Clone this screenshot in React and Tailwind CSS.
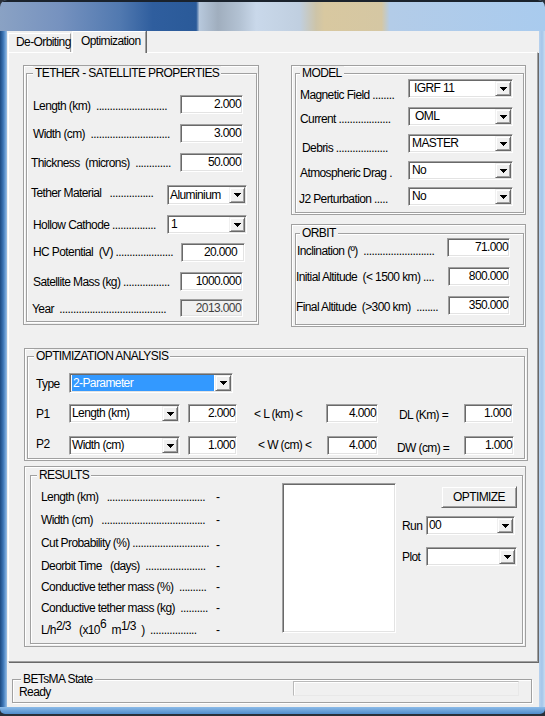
import React from 'react';

// classic win32 bevels
const sunken =
  'border border-t-[#a0a0a0] border-l-[#a0a0a0] border-r-white border-b-white shadow-[inset_1px_1px_0_#696969,inset_-1px_-1px_0_#e3e3e3]';
const raised =
  'border border-t-[#f0f0f0] border-l-[#f0f0f0] border-r-[#696969] border-b-[#696969] shadow-[inset_1px_1px_0_#fff,inset_-1px_-1px_0_#a0a0a0]';

const d = (n) => '.'.repeat(n);

function Arrow() {
  return (
    <svg width="7" height="4" viewBox="0 0 7 4" className="block">
      <path d="M0 0h7v1h-1v1h-1v1h-1v1h-1v-1h-1v-1h-1v-1h-1z" fill="#000" />
    </svg>
  );
}

function Combo({ value, size, pad = 'pl-[3px]', selected = false }) {
  return (
    <div className={`flex shrink-0 items-center bg-white ${sunken} ${size}`}>
      {selected ? (
        <span className="flex-1 self-stretch my-[1px] ml-[2px] mr-[1px] pl-[1px] flex items-center bg-[#3399ff] text-white whitespace-pre">
          {value}
        </span>
      ) : (
        <span className={`flex-1 whitespace-pre overflow-hidden ${pad}`}>{value}</span>
      )}
      <span className={`self-stretch my-[1px] mr-[1px] w-[16px] shrink-0 flex items-center justify-center bg-[#f0f0f0] ${raised}`}>
        <Arrow />
      </span>
    </div>
  );
}

function Field({ value, size, pr = 'pr-[1px]', disabled = false }) {
  return (
    <div
      className={`flex shrink-0 items-center justify-end whitespace-pre ${pr} ${
        disabled ? 'bg-[#f0f0f0] text-[#404040]' : 'bg-white'
      } ${sunken} ${size}`}
    >
      {value}
    </div>
  );
}

function Label({ children, className = '' }) {
  return <div className={`shrink-0 whitespace-pre overflow-x-clip ${className}`}>{children}</div>;
}

function Group({ title, tl = 'left-[6px]', className = '', children }) {
  return (
    <div className={`relative border border-[#a0a0a0] shadow-[inset_1px_1px_0_#fff,1px_1px_0_#fff] ${className}`}>
      <span className={`absolute -top-[8px] ${tl} bg-[#f0f0f0] px-[2px] whitespace-pre`}>{title}</span>
      {children}
    </div>
  );
}

function Frame({ className = '', children }) {
  return (
    <div className={`flex flex-col border border-[#a0a0a0] shadow-[inset_1px_1px_0_#fff] ${className}`}>
      {children}
    </div>
  );
}

const tetherRows = [
  { label: 'Length (km)  ' + d(26), row: 'mt-[21px] h-[19px]', lab: 'w-[153px] pl-[6px] pt-[4px]', ctrl: <Field value="2.000" size="w-[63px] h-[19px]" /> },
  { label: 'Width (cm)  ' + d(29), row: 'mt-[10px] h-[19px]', lab: 'w-[153px] pl-[6px] pt-[3px]', ctrl: <Field value="3.000" size="w-[63px] h-[19px]" /> },
  { label: 'Thickness  (microns)  ' + d(13), row: 'mt-[10px] h-[19px]', lab: 'w-[153px] pl-[4px] pt-[3px]', ctrl: <Field value="50.000" size="w-[63px] h-[19px]" /> },
  { label: 'Tether Material   ' + d(16), row: 'mt-[13px] h-[20px]', lab: 'w-[140px] pl-[4px] pt-[1px]', ctrl: <Combo value="Aluminium" size="w-[80px] h-[20px]" pad="pl-[2px]" /> },
  { label: 'Hollow Cathode ' + d(16), row: 'mt-[10px] h-[19px]', lab: 'w-[140px] pl-[6px] pt-[3px]', ctrl: <Combo value="1" size="w-[80px] h-[19px]" pad="pl-[3px]" /> },
  { label: 'HC Potential  (V) ' + d(21), row: 'mt-[9px] h-[19px]', lab: 'w-[154px] pl-[6px] pt-[2px]', ctrl: <Field value="20.000" size="w-[64px] h-[19px]" pr="pr-[7px]" /> },
  { label: 'Satellite Mass (kg) ' + d(17), row: 'mt-[10px] h-[19px]', lab: 'w-[153px] pl-[6px] pt-[3px]', ctrl: <Field value="1000.000" size="w-[63px] h-[19px]" /> },
  { label: 'Year  ' + d(39), row: 'mt-[8px] h-[18px]', lab: 'w-[153px] pl-[5px] pt-[3px]', ctrl: <Field value="2013.000" size="w-[63px] h-[18px]" disabled /> },
];

const modelRows = [
  { label: 'Magnetic Field ' + d(8), row: 'mt-[5px] h-[19px]', lab: 'pl-[4px] pt-[9px]', value: 'IGRF 11', pad: 'pl-[5px]' },
  { label: 'Current ' + d(19), row: 'mt-[9px] h-[19px]', lab: 'pl-[4px] pt-[5px]', value: 'OML', pad: 'pl-[6px]' },
  { label: 'Debris ' + d(19), row: 'mt-[8px] h-[19px]', lab: 'pl-[6px] pt-[7px]', value: 'MASTER', pad: 'pl-[3px]' },
  { label: 'Atmospheric Drag .', row: 'mt-[8px] h-[19px]', lab: 'pl-[4px] pt-[5px]', value: 'No', pad: 'pl-[3px]' },
  { label: 'J2 Perturbation ' + d(5), row: 'mt-[7px] h-[19px]', lab: 'pl-[3px] pt-[5px]', value: 'No', pad: 'pl-[3px]' },
];

const orbitRows = [
  { label: 'Inclination (º)  ' + d(26), row: 'mt-[4px] h-[19px]', lab: 'w-[151px] pl-[1px] pt-[6px]', ctrl: <Field value="71.000" size="w-[63px] h-[19px]" /> },
  { label: 'Initial Altitude  (< 1500 km) ' + d(4), row: 'mt-[10px] h-[19px]', lab: 'w-[152px] pt-[3px]', ctrl: <Field value="800.000" size="w-[62px] h-[19px]" /> },
  { label: 'Final Altitude  (>300 km)  ' + d(8), row: 'mt-[10px] h-[19px]', lab: 'w-[152px] pt-[4px]', ctrl: <Field value="350.000" size="w-[62px] h-[19px]" /> },
];

const results = [
  { label: 'Length (km)   ' + d(36), row: 'mt-[14px] h-[15px]', dash: '' },
  { label: 'Width (cm)   ' + d(38), row: 'mt-[8px] h-[15px]', dash: '' },
  { label: 'Cut Probability (%) ' + d(28), row: 'mt-[8px] h-[15px]', dash: 'pt-[2px]' },
  { label: 'Deorbit Time   (days)  ' + d(22), row: 'mt-[8px] h-[15px]', dash: '' },
  { label: 'Conductive tether mass (%)  ' + d(10), row: 'mt-[6px] h-[15px]', dash: '' },
  { label: 'Conductive tether mass (kg)  ' + d(10), row: 'mt-[6px] h-[15px]', dash: '' },
  {
    label: (
      <>
        L/h<span className="align-[4px]">2/3</span>
        {'   (x10'}
        <span className="align-[6px]">6</span>
        {'  m'}
        <span className="align-[4px]">1/3</span>
        {'  )  ' + d(17)}
      </>
    ),
    row: 'mt-[1px] h-[21px]',
    dash: 'pt-[6px]',
  },
];

function OptimizationPanel() {
  return (
    <div className="ml-[1px] w-[530px] h-[610px] shrink-0 flex flex-col border border-t-white border-l-white border-r-[#a0a0a0] border-b-[#a0a0a0] shadow-[1px_1px_0_#696969]">
      {/* top: tether properties + model / orbit */}
      <div className="flex mt-[12px] ml-[14px]">
        <Frame className="w-[236px] h-[260px] pt-[7px] pl-[2px] pr-[1px] pb-[2px]">
          <Group title="TETHER - SATELLITE PROPERTIES" className="flex-1 flex flex-col">
            {tetherRows.map((r) => (
              <div key={r.label} className={`flex items-start ${r.row}`}>
                <Label className={r.lab}>{r.label}</Label>
                {r.ctrl}
              </div>
            ))}
          </Group>
        </Frame>

        <div className="ml-[32px] w-[235px] flex flex-col">
          <Frame className="h-[150px] pt-[7px] pl-[3px] pr-[1px] pb-[1px]">
            <Group title="MODEL" tl="left-[4px]" className="flex-1 flex flex-col">
              {modelRows.map((r) => (
                <div key={r.label} className={`flex items-start ${r.row}`}>
                  <Label className={`w-[112px] ${r.lab}`}>{r.label}</Label>
                  <Combo value={r.value} size="w-[105px] h-[19px]" pad={r.pad} />
                </div>
              ))}
            </Group>
          </Frame>
          <Frame className="mt-[9px] h-[103px] pt-[8px] pl-[3px] pr-[1px] pb-[1px]">
            <Group title="ORBIT" tl="left-[4px]" className="flex-1 flex flex-col">
              {orbitRows.map((r) => (
                <div key={r.label} className={`flex items-start ${r.row}`}>
                  <Label className={r.lab}>{r.label}</Label>
                  {r.ctrl}
                </div>
              ))}
            </Group>
          </Frame>
        </div>
      </div>

      {/* optimization analysis */}
      <Frame className="mt-[21px] ml-[15px] w-[504px] h-[113px] pt-[7px] pl-[2px] pr-[2px] pb-[1px]">
        <Group title="OPTIMIZATION ANALYSIS" className="flex-1 flex flex-col">
          <div className="flex items-start mt-[16px] h-[20px]">
            <Label className="w-[41px] pl-[8px] pt-[4px]">Type</Label>
            <Combo value="2-Parameter" size="w-[164px] h-[20px]" selected />
          </div>
          <div className="flex items-start mt-[11px] h-[19px]">
            <Label className="w-[41px] pl-[8px] pt-[3px]">P1</Label>
            <Combo value="Length (km)" size="w-[111px] h-[19px]" pad="pl-[2px]" />
            <div className="ml-[8px]">
              <Field value="2.000" size="w-[49px] h-[19px]" />
            </div>
            <Label className="w-[89px] pl-[17px] pt-[3px]">{'< L (km) <'}</Label>
            <Field value="4.000" size="w-[52px] h-[19px]" />
            <Label className="w-[86px] pl-[21px] pt-[4px]">DL (Km) =</Label>
            <Field value="1.000" size="w-[49px] h-[19px]" />
          </div>
          <div className="flex items-start mt-[13px] h-[19px]">
            <Label className="w-[41px] pl-[8px] pt-[1px]">P2</Label>
            <Combo value="Width (cm)" size="w-[111px] h-[19px]" pad="pl-[2px]" />
            <div className="ml-[8px]">
              <Field value="1.000" size="w-[49px] h-[19px]" />
            </div>
            <Label className="w-[90px] pl-[21px] pt-[2px]">{'< W (cm) <'}</Label>
            <Field value="4.000" size="w-[51px] h-[19px]" />
            <Label className="w-[86px] pl-[19px] pt-[5px]">DW (cm) =</Label>
            <Field value="1.000" size="w-[50px] h-[19px]" />
          </div>
        </Group>
      </Frame>

      {/* results */}
      <Frame className="mt-[5px] ml-[15px] w-[502px] h-[181px] pt-[8px] pl-[5px] pr-[2px] pb-[2px]">
        <Group title="RESULTS" className="flex-1 flex items-start">
          <div className="w-[251px] shrink-0 flex flex-col">
            {results.map((r, i) => (
              <div key={i} className={`flex items-start ${r.row}`}>
                <Label className="w-[185px] pl-[10px]">{r.label}</Label>
                <span className={r.dash}>-</span>
              </div>
            ))}
          </div>
          <div className={`mt-[7px] w-[114px] h-[150px] shrink-0 bg-white ${sunken}`} />
          <div className="flex flex-col pl-[6px]">
            <div className={`mt-[10px] ml-[39px] w-[76px] h-[22px] flex items-center justify-center bg-[#f0f0f0] ${raised}`}>
              OPTIMIZE
            </div>
            <div className="flex items-start mt-[8px] h-[19px]">
              <Label className="w-[24px] pt-[3px]">Run</Label>
              <Combo value="00" size="w-[89px] h-[19px]" pad="pl-[2px]" />
            </div>
            <div className="flex items-start mt-[12px] h-[19px]">
              <Label className="w-[24px] pt-[3px]">Plot</Label>
              <Combo value="" size="w-[91px] h-[19px]" />
            </div>
          </div>
        </Group>
      </Frame>
    </div>
  );
}

export default function App() {
  return (
    <div className="w-[545px] h-[716px] overflow-hidden bg-[#2a3039] font-['Liberation_Sans',Arial,sans-serif] text-[12px] tracking-[-0.6px] leading-[15px] text-black">
      <div className="h-[714px] flex flex-col rounded-t-[7px] rounded-b-[5px] overflow-hidden">
        {/* blurred aero title bar */}
        <div className="h-[31px] shrink-0 flex flex-col bg-[linear-gradient(90deg,#8aa2c4_0%,#7692bf_11%,#5179b0_22%,#2f5e9e_28%,#2a5a99_36%,#b7c8dc_36.6%,#a0aebe_40%,#b3c2d3_44%,#c9d8ea_47%,#c0cfe0_55%,#cdc4a8_58%,#d8c8a0_59.5%,#d5c7a3_70%,#b3cce8_71.5%,#a9cbee_100%)]">
          <div className="h-[2px] bg-[#1a222c]" />
        </div>

        <div className="flex h-[676px] shrink-0">
          <div className="w-[7px] bg-[linear-gradient(90deg,#1d4a80,#3b74b4_45%,#6a9dd4_75%,#9cbfe2)]" />

          <div className="w-[532px] bg-[#f0f0f0] flex flex-col">
            {/* tabs */}
            <div className="h-[21px] shrink-0 flex items-end pl-[1px]">
              <div className="w-[63px] h-[19px] border-l border-t border-r border-l-white border-t-white border-r-[#a0a0a0] pl-[7px] pt-[1px] whitespace-pre">
                De-Orbiting
              </div>
              <div className="relative z-10 -mb-[1px] ml-[1px] w-[74px] h-[22px] bg-[#f0f0f0] border-l border-t border-r border-l-white border-t-white border-r-[#a0a0a0] shadow-[1px_0_0_#696969] pl-[8px] pt-[2px] whitespace-pre">
                Optimization
              </div>
            </div>

            <OptimizationPanel />

            {/* status */}
            <Group title="BETsMA State" tl="left-[8px]" className="mt-[17px] ml-[5px] w-[520px] h-[24px] flex items-start">
              <div className="w-[280px] pl-[6px] pt-[5px] whitespace-pre">Ready</div>
              <div className="mt-[1px] w-[226px] h-[15px] border border-t-[#b9b9b9] border-l-[#b9b9b9] border-r-[#e8e8e8] border-b-[#e8e8e8] bg-[#f0f0f0] shadow-[inset_1px_1px_0_#fff]" />
            </Group>
          </div>

          <div className="w-[6px] bg-[linear-gradient(90deg,#b8d2ee,#a4c6ea_50%,#c8dcf0)]" />
        </div>

        <div className="h-[7px] shrink-0 bg-[linear-gradient(180deg,#8cbbe8,#4f8ccc)]" />
      </div>
    </div>
  );
}
